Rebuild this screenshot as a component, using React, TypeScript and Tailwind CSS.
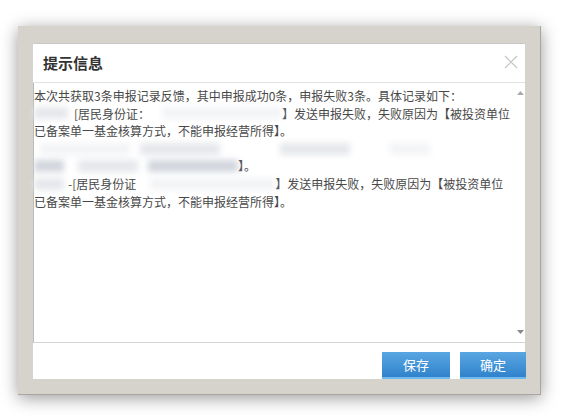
import React from 'react';

const font = { fontFamily: '"Microsoft YaHei", "Noto Sans CJK SC", "Liberation Sans", sans-serif' };

function Blur({ w, tone = 'bg-gray-300' }: { w: string; tone?: string }) {
  return <span className={`inline-block h-[12px] align-middle blur-[3px] ${w} ${tone}`} />;
}

export default function App() {
  return (
    <div className="w-[568px] h-[418px] bg-white pt-[26px] pl-[18px]" style={font}>
      <div className="w-[523px] h-[369px] bg-[#d6d3cc] border-r border-b border-[#a8a6a0] pt-[17px] pl-[15px] shadow-[0_3px_16px_rgba(0,0,0,0.4)]">
        <div className="w-[492px] h-[336px] bg-white flex flex-col">
          <div className="h-[40px] flex items-center justify-between pl-[10px] pr-[6px] border-b border-[#e2e2e2] border-t border-t-[#c8c8c8]">
            <span className="text-[15px] font-bold text-[#333]">提示信息</span>
            <svg width="16" height="16" viewBox="0 0 16 16" className="-mt-[3px]">
              <path d="M2 2 L14 14 M14 2 L2 14" stroke="#c4c4c4" strokeWidth="1.2" />
            </svg>
          </div>
          <div className="h-[260px] flex border-b border-[#d4d4d4] border-l border-l-[#bbb]">
            <div className="flex-1 pt-[4px] text-[12px] leading-[17.6px] text-[#484848]">
              <div>本次共获取3条申报记录反馈，其中申报成功0条，申报失败3条。具体记录如下：</div>
              <div className="flex items-center">
                <Blur w="w-[34px]" tone="bg-gray-200" />
                <span className="ml-[6px]">[居民身份证：</span>
                <Blur w="w-[120px] ml-[12px]" tone="bg-gray-100" />
                <span>】发送申报失败，失败原因为【被投资单位</span>
              </div>
              <div>已备案单一基金核算方式，不能申报经营所得】。</div>
              <div className="flex items-center h-[17.6px]">
                <Blur w="w-[90px] ml-[6px]" tone="bg-gray-100" />
                <Blur w="w-[80px] ml-[10px]" tone="bg-gray-200" />
                <Blur w="w-[70px] ml-[60px]" tone="bg-gray-200" />
                <Blur w="w-[40px] ml-[40px]" tone="bg-gray-100" />
              </div>
              <div className="flex items-center">
                <Blur w="w-[30px]" tone="bg-gray-300" />
                <Blur w="w-[60px] ml-[14px]" tone="bg-gray-200" />
                <Blur w="w-[90px] ml-[10px]" tone="bg-gray-300" />
                <span>】。</span>
              </div>
              <div className="flex items-center">
                <Blur w="w-[30px]" tone="bg-gray-200" />
                <span className="ml-[4px]">-[居民身份证</span>
                <Blur w="w-[125px] ml-[14px]" tone="bg-gray-100" />
                <span>】发送申报失败，失败原因为【被投资单位</span>
              </div>
              <div>已备案单一基金核算方式，不能申报经营所得】。</div>
            </div>
            <div className="w-[10px] flex flex-col justify-between items-center py-[8px]">
              <svg width="7" height="4" viewBox="0 0 7 4"><path d="M0 4 L3.5 0 L7 4 Z" fill="#aaa" /></svg>
              <svg width="7" height="4" viewBox="0 0 7 4"><path d="M0 0 L3.5 4 L7 0 Z" fill="#888" /></svg>
            </div>
          </div>
          <div className="flex-1 flex justify-end items-end gap-[10px] -mr-[1px]">
            <button className="w-[68px] h-[27px] bg-gradient-to-b from-[#5aa6e2] to-[#2f83cc] text-white text-[13px] border-b-2 border-[#6fb8f0]">保存</button>
            <button className="w-[66px] h-[27px] bg-gradient-to-b from-[#5aa6e2] to-[#2f83cc] text-white text-[13px] border-b-2 border-[#6fb8f0]">确定</button>
          </div>
        </div>
      </div>
    </div>
  );
}
